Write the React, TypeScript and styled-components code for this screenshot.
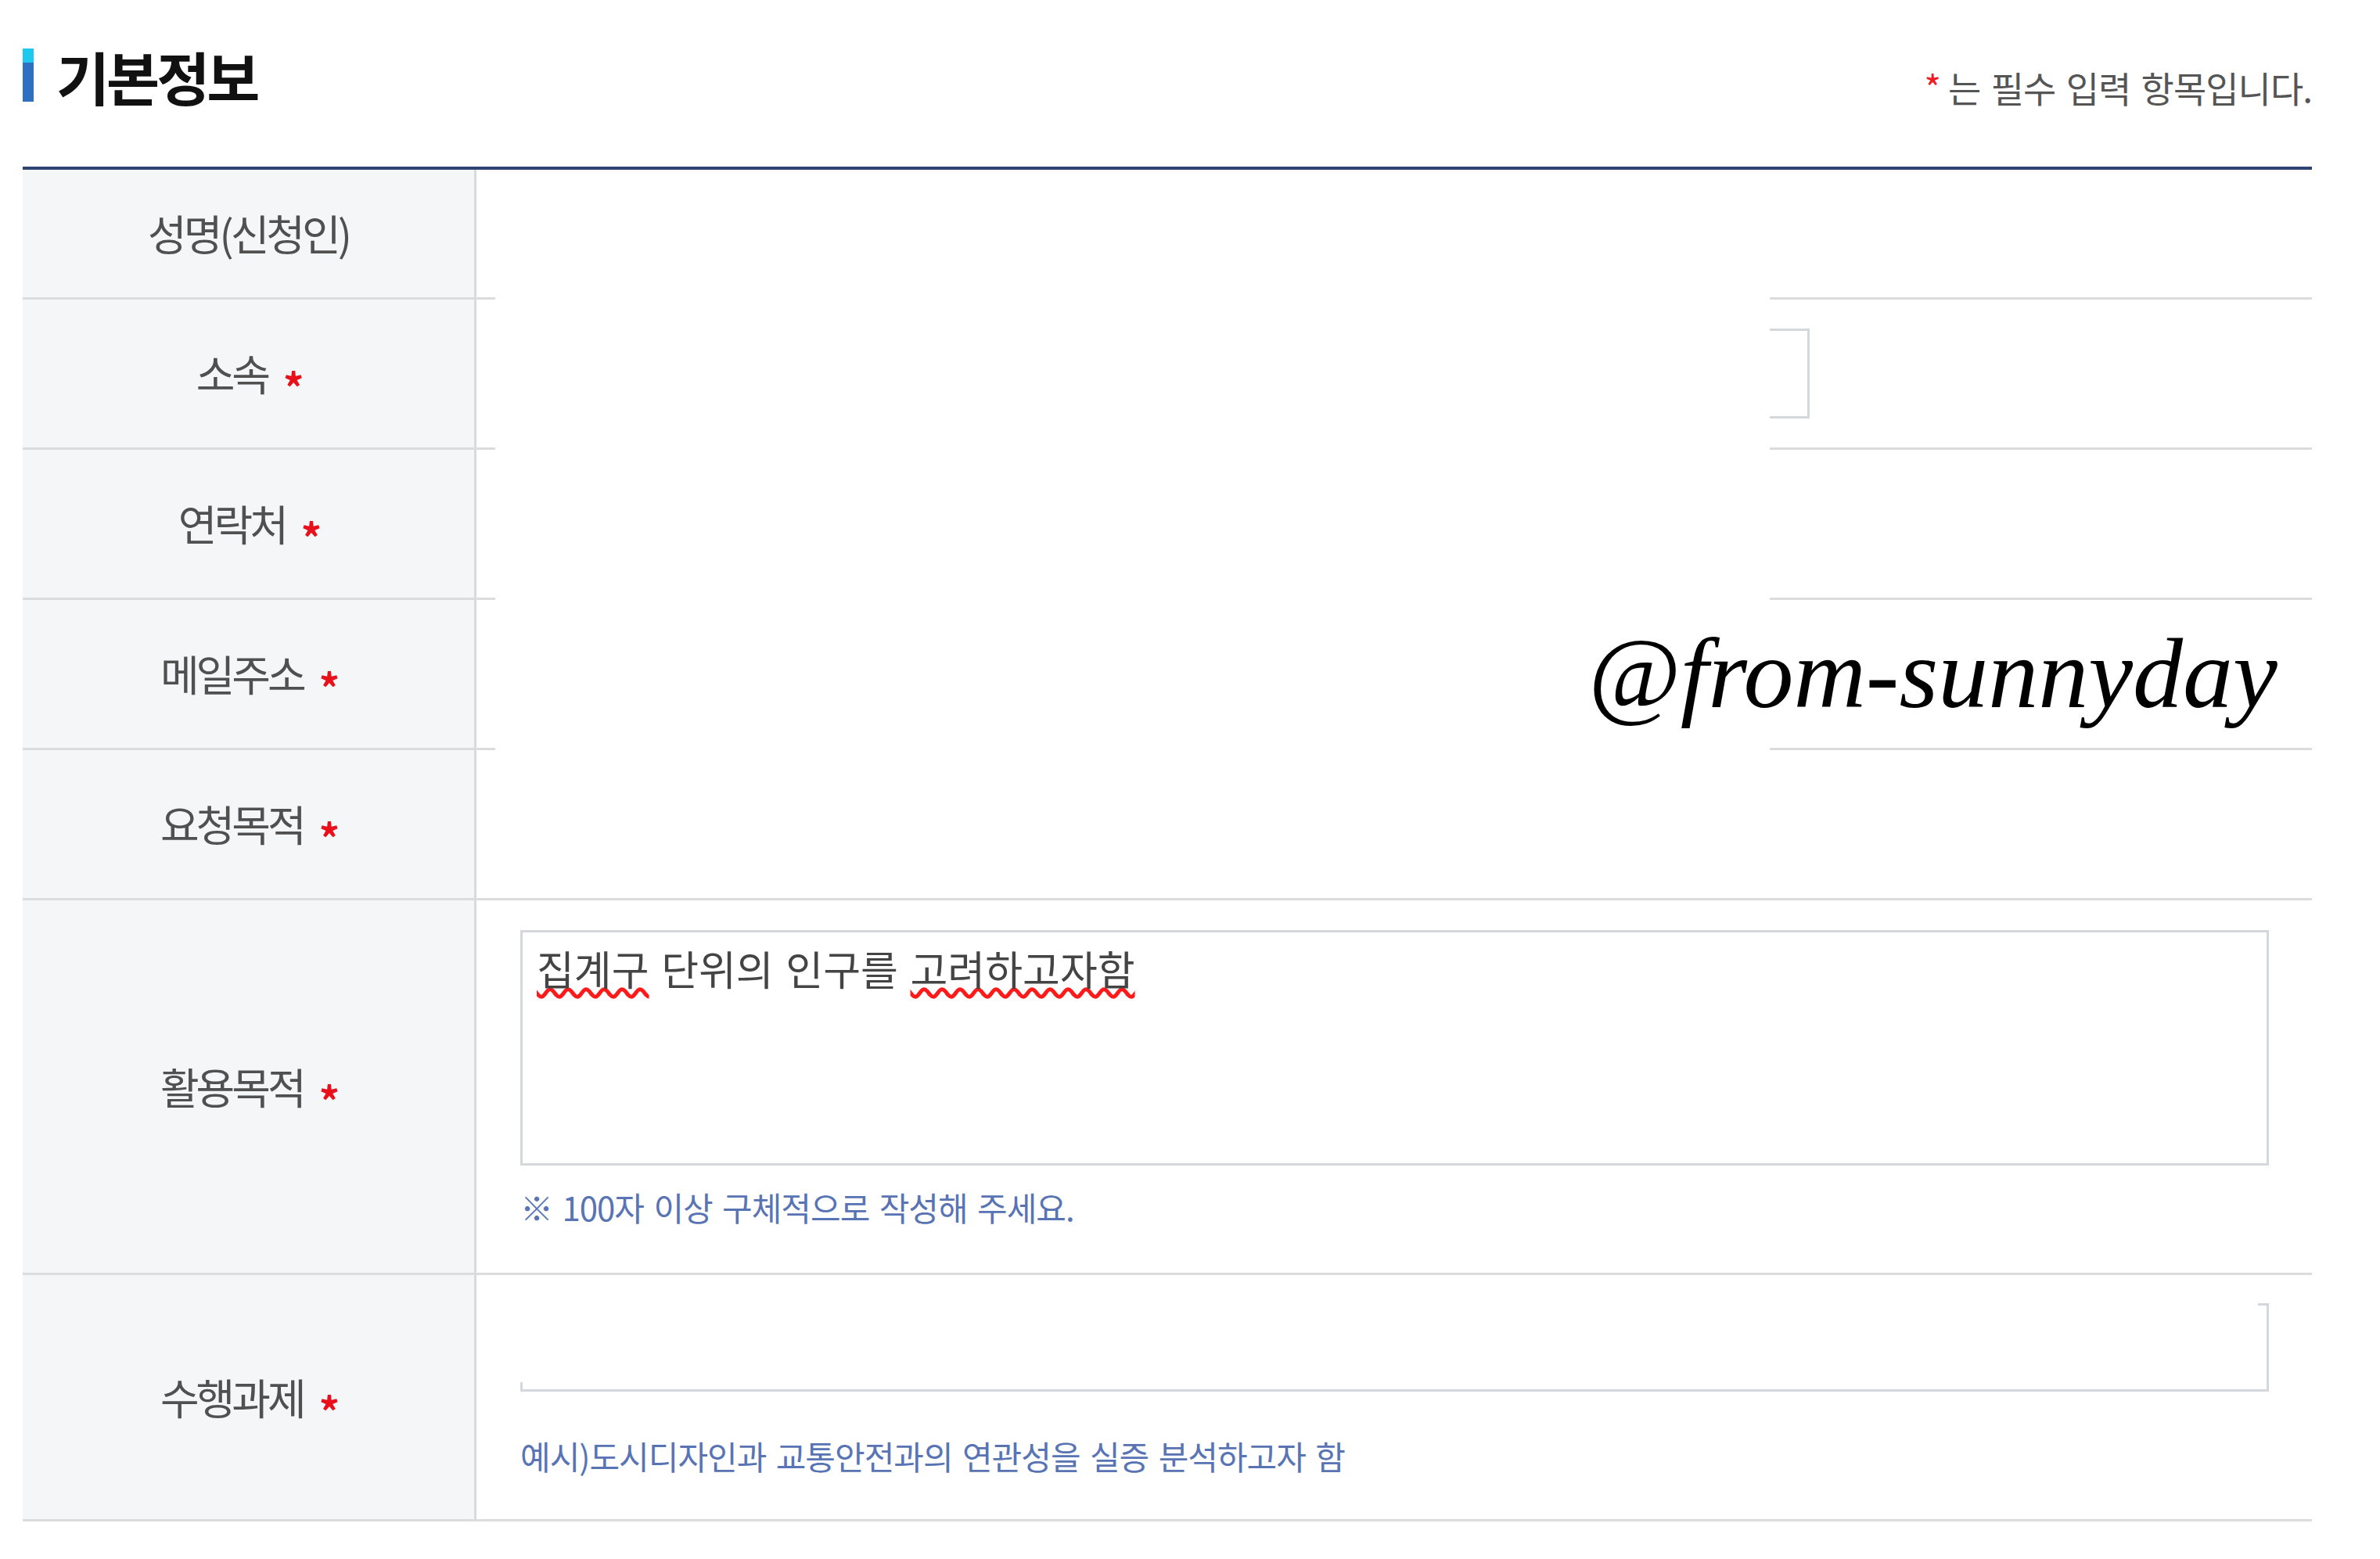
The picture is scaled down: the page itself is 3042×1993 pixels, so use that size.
import React from "react";
import styled, { createGlobalStyle } from "styled-components";

const GlobalStyle = createGlobalStyle`
  html, body { margin: 0; padding: 0; background: #fff; }
  body { font-family: "Noto Sans CJK KR", "Noto Sans", sans-serif; }
`;

const Page = styled.div`
  position: relative;
  width: 3042px;
  height: 1993px;
  box-sizing: border-box;
  padding: 0 87px 0 29px;
  background: #fff;
  overflow: hidden;
`;

const Header = styled.header`
  display: flex;
  justify-content: space-between;
  align-items: flex-end;
  height: 134px;
  margin-bottom: 79px;
`;

const TitleWrap = styled.div`
  display: flex;
  align-items: flex-end;
  gap: 29px;
`;

const TitleBar = styled.span`
  display: block;
  width: 14px;
  height: 68px;
  margin-bottom: 4px;
  background: linear-gradient(#1ec8ee 0 18px, #2e6fc1 18px 100%);
`;

const Title = styled.h2`
  margin: 0;
  font-size: 74px;
  font-weight: 700;
  line-height: 1;
  letter-spacing: -4px;
  color: #111;
`;

const Note = styled.p`
  margin: 0;
  font-size: 46px;
  line-height: 1;
  letter-spacing: -1px;
  word-spacing: 4px;
  color: #555;
`;

const NoteStar = styled.span`
  color: #ee1c25;
  margin-right: 10px;
`;

const Table = styled.div`
  border-top: 4px solid #2d4371;
`;

const Row = styled.div<{ $h: number }>`
  display: grid;
  grid-template-columns: 580px 1fr;
  height: ${(p) => p.$h}px;
  box-sizing: border-box;
  border-bottom: 3px solid #dcdcdc;
`;

const LabelCell = styled.div`
  display: flex;
  align-items: center;
  justify-content: center;
  box-sizing: border-box;
  background: #f5f6f8;
  border-right: 3px solid #dadada;
  font-size: 54px;
  line-height: 1.2;
  letter-spacing: -4px;
  color: #505050;
  white-space: nowrap;
`;

const Star = styled.span`
  color: #e8101a;
  font-weight: 700;
  font-size: 52px;
  line-height: 0;
  margin-left: 20px;
  vertical-align: -16px;
`;

const FieldCell = styled.div<{ $top?: number }>`
  display: flex;
  flex-direction: column;
  justify-content: ${(p) => (p.$top !== undefined ? "flex-start" : "center")};
  padding: ${(p) => (p.$top !== undefined ? p.$top : 0)}px 55px 0 56px;
  box-sizing: border-box;
`;

const InputBox = styled.div<{ $w?: number; $h?: number }>`
  width: ${(p) => (p.$w ? `${p.$w}px` : "100%")};
  height: ${(p) => p.$h ?? 115}px;
  box-sizing: border-box;
  border: 3px solid #d4d7dc;
  background: #fff;
`;

const TextArea = styled.div`
  height: 301px;
  box-sizing: border-box;
  border: 3px solid #d4d7dc;
  padding: 20px 18px;
  font-size: 52px;
  line-height: 1;
  letter-spacing: 0;
  word-spacing: 4px;
  color: #444;
  white-space: nowrap;
`;

const Misspelled = styled.span`
  text-decoration: underline wavy #ff1a1a;
  text-decoration-thickness: 5px;
  text-underline-offset: 3px;
`;

const Hint = styled.p<{ $gap: number }>`
  margin: ${(p) => p.$gap}px 0 0;
  font-size: 42px;
  line-height: 1;
  letter-spacing: -1px;
  word-spacing: 4px;
  color: #5874b4;
  white-space: nowrap;
`;

const Cover = styled.div<{ $x: number; $y: number; $w: number; $h: number }>`
  position: absolute;
  left: ${(p) => p.$x}px;
  top: ${(p) => p.$y}px;
  width: ${(p) => p.$w}px;
  height: ${(p) => p.$h}px;
  background: #fff;
`;

const Watermark = styled.div`
  position: absolute;
  left: 2030px;
  top: 797px;
  font-family: "Liberation Serif", "Times New Roman", serif;
  font-style: italic;
  font-size: 128px;
  line-height: 1;
  color: #000;
  white-space: nowrap;
`;

type RowDef = { label: string; required: boolean; h: number; input?: number };

const simpleRows: RowDef[] = [
  { label: "성명(신청인)", required: false, h: 166 },
  { label: "소속", required: true, h: 192, input: 1648 },
  { label: "연락처", required: true, h: 192, input: 1400 },
  { label: "메일주소", required: true, h: 192, input: 1400 },
  { label: "요청목적", required: true, h: 192, input: 1400 },
];

const Label: React.FC<{ text: string; required: boolean }> = ({ text, required }) => (
  <LabelCell>
    <span>
      {text}
      {required && <Star>*</Star>}
    </span>
  </LabelCell>
);

export default function App() {
  return (
    <>
      <GlobalStyle />
      <Page>
        <Header>
          <TitleWrap>
            <TitleBar />
            <Title>기본정보</Title>
          </TitleWrap>
          <Note>
            <NoteStar>*</NoteStar>는 필수 입력 항목입니다.
          </Note>
        </Header>
        <Table>
          {simpleRows.map((r) => (
            <Row key={r.label} $h={r.h}>
              <Label text={r.label} required={r.required} />
              <FieldCell>{r.input ? <InputBox $w={r.input} /> : null}</FieldCell>
            </Row>
          ))}
          <Row $h={479}>
            <Label text="활용목적" required />
            <FieldCell $top={38}>
              <TextArea>
                <Misspelled>집계구</Misspelled> 단위의 인구를 <Misspelled>고려하고자함</Misspelled>
              </TextArea>
              <Hint $gap={32}>※ 100자 이상 구체적으로 작성해 주세요.</Hint>
            </FieldCell>
          </Row>
          <Row $h={315}>
            <Label text="수행과제" required />
            <FieldCell $top={36}>
              <InputBox $h={113} />
              <Hint $gap={61}>예시)도시디자인과 교통안전과의 연관성을 실증 분석하고자 함</Hint>
            </FieldCell>
          </Row>
        </Table>
        <Cover $x={633} $y={219} $w={1629} $h={928} />
        <Cover $x={640} $y={1645} $w={2246} $h={122} />
        <Watermark>@from-sunnyday</Watermark>
      </Page>
    </>
  );
}
